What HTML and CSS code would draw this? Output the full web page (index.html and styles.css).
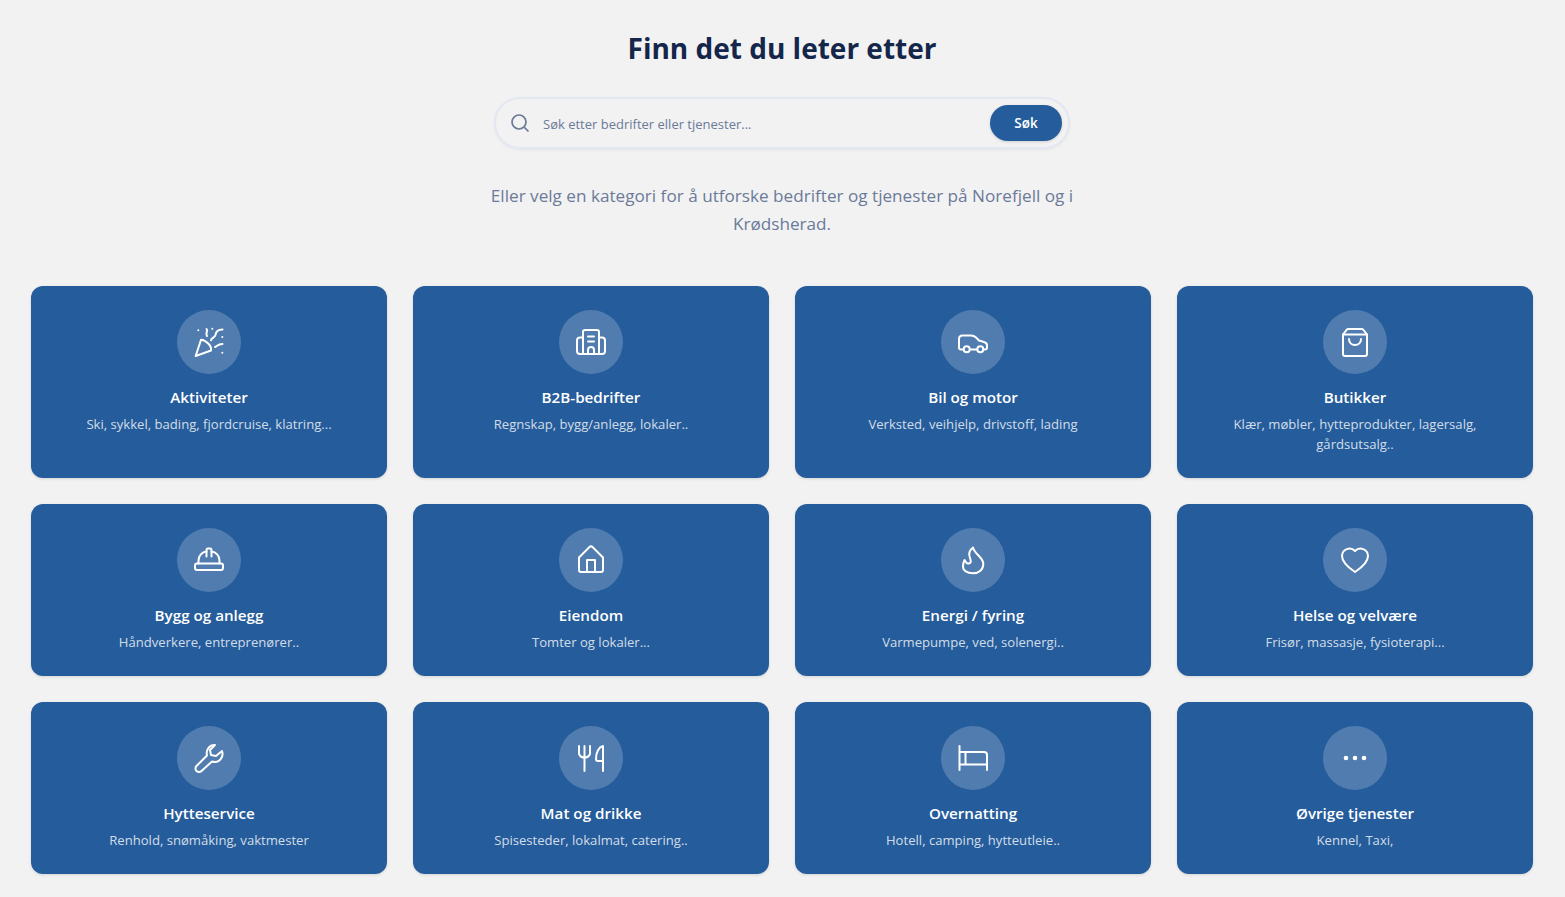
FILE: index.html
```html
<!DOCTYPE html>
<html lang="no">
<head>
    <meta charset="UTF-8">
    <meta name="viewport" content="width=device-width, initial-scale=1.0">
    <title>Finn det du leter etter</title>
    <link rel="stylesheet" href="styles.css">
</head>
<body>
    <main class="page">
        <h1>Finn det du leter etter</h1>

        <form class="search">
            <svg class="search-icon" viewBox="0 0 20 20"><circle cx="9" cy="9" r="7"/><path d="M14 14l4.5 4.5"/></svg>
            <input type="text" placeholder="Søk etter bedrifter eller tjenester...">
            <button type="button">Søk</button>
        </form>

        <p class="intro">Eller velg en kategori for å utforske bedrifter og tjenester på Norefjell og i Krødsherad.</p>

        <section class="grid">
            <a class="card">
                <span class="icon"><svg viewBox="0 0 32 32"><path d="M8 13.7L2.7 30 18 24.5C19 20 13 14 8 13.7z"/><path d="M13.5 3c2.5 2-2 4 .5 7"/><path d="M18 14.3c.5-3 4-2.5 4.5-5.500.5-3.500 3-5.300 7-5.300"/><path d="M22 21c2-.5 2.500-3 7.500-3"/><path d="M5.3 4.3h.01M19.3 2.700h.01M29.3 11h.01M29.3 26.700h.01"/></svg></span>
                <h2>Aktiviteter</h2>
                <p>Ski, sykkel, bading, fjordcruise, klatring...</p>
            </a>
            <a class="card">
                <span class="icon"><svg viewBox="0 0 32 32"><path d="M8 28V6a2 2 0 0 1 2-2h12a2 2 0 0 1 2 2v22"/><path d="M8 11.5H5a3 3 0 0 0-3 3V25a3 3 0 0 0 3 3h22a3 3 0 0 0 3-3V14.5a3 3 0 0 0-3-3h-3"/><path d="M13 10.5h6M13 15.5h6"/><path d="M13 28v-4a3 3 0 0 1 6 0v4"/></svg></span>
                <h2>B2B-bedrifter</h2>
                <p>Regnskap, bygg/anlegg, lokaler..</p>
            </a>
            <a class="card">
                <span class="icon"><svg viewBox="0 0 32 32"><path d="M6.5 23.5H4a2 2 0 0 1-2-2V13c0-2.500 1.500-3.500 3.500-3.500H14c2 0 3.500.5 5 2l3 3 5 1.500c2 .5 3 1.500 3 3.500v2a2 2 0 0 1-2 2h-1.500M13 23.500h7"/><circle cx="9.7" cy="23.3" r="3"/><circle cx="23.3" cy="23.3" r="3"/></svg></span>
                <h2>Bil og motor</h2>
                <p>Verksted, veihjelp, drivstoff, lading</p>
            </a>
            <a class="card">
                <span class="icon"><svg viewBox="0 0 32 32"><path d="M4 8.5V28a2 2 0 0 0 2 2h20a2 2 0 0 0 2-2V8.5L24.5 4a2.5 2.5 0 0 0-2-1h-13a2.500 2.500 0 0 0-2 1z"/><path d="M4 8.5h24"/><path d="M10 13c0 3.5 2.500 6 6 6s6-2.500 6-6"/></svg></span>
                <h2>Butikker</h2>
                <p>Klær, møbler, hytteprodukter, lagersalg, gårdsutsalg..</p>
            </a>

            <a class="card">
                <span class="icon"><svg viewBox="0 0 32 32"><rect x="2" y="19.5" width="28" height="6.500" rx="2"/><path d="M5.5 19.5v-3C5.500 11.500 9 8 13.500 7.500M26.500 19.500v-3C26.500 11.500 23 8 18.500 7.500"/><path d="M13.5 12.5V6A1.500 1.500 0 0 1 15 4.500h2A1.500 1.500 0 0 1 18.500 6v6.500"/></svg></span>
                <h2>Bygg og anlegg</h2>
                <p>Håndverkere, entreprenører..</p>
            </a>
            <a class="card">
                <span class="icon"><svg viewBox="0 0 32 32"><path d="M4 13.5L14.5 3a2 2 0 0 1 3 0L28 13.500V26a2 2 0 0 1-2 2H6a2 2 0 0 1-2-2z"/><path d="M12 28V16h8v12"/></svg></span>
                <h2>Eiendom</h2>
                <p>Tomter og lokaler...</p>
            </a>
            <a class="card">
                <span class="icon"><svg viewBox="0 0 32 32"><path d="M16 3.5C12.5 6 11.500 10 13 14c1 3 1.500 5-1 5.500-2 .5-3.500-1.500-4.500-3.500C6.500 18 6 20.500 6 22.500c0 4 4 6.800 10 6.800s10.300-3.800 10.300-9.300C26.300 13 18 11 16 3.500z"/></svg></span>
                <h2>Energi / fyring</h2>
                <p>Varmepumpe, ved, solenergi..</p>
            </a>
            <a class="card">
                <span class="icon"><svg viewBox="0 0 32 32"><path d="M16 28C10 24 3 18.5 3 12a7.500 7.500 0 0 1 13-5 7.500 7.500 0 0 1 13 5c0 6.500-7 12-13 16z"/></svg></span>
                <h2>Helse og velvære</h2>
                <p>Frisør, massasje, fysioterapi...</p>
            </a>

            <a class="card">
                <span class="icon"><svg viewBox="0 0 32 32"><path d="M22 3l-5 5 1 5 5 1 6-5c2 5-2 11-7 11-1 0-2 0-3-.5L8.500 29a3.500 3.500 0 0 1-5-5L14 13.500C12.500 7.500 17 2.500 22 3z"/></svg></span>
                <h2>Hytteservice</h2>
                <p>Renhold, snømåking, vaktmester</p>
            </a>
            <a class="card">
                <span class="icon"><svg viewBox="0 0 32 32"><path d="M4 4v8a6 6 0 0 0 11 0V4M9.5 4v25"/><path d="M28 29V4c-4 1-7 6-7 13a2 2 0 0 0 2 2h5"/></svg></span>
                <h2>Mat og drikke</h2>
                <p>Spisesteder, lokalmat, catering..</p>
            </a>
            <a class="card">
                <span class="icon"><svg viewBox="0 0 32 32"><path d="M2.5 4v24M2.5 22.5H30M8.5 10v12.500M2.500 10H27a3 3 0 0 1 3 3v15"/></svg></span>
                <h2>Overnatting</h2>
                <p>Hotell, camping, hytteutleie..</p>
            </a>
            <a class="card">
                <span class="icon"><svg class="dots" viewBox="0 0 32 32"><circle cx="7" cy="16" r="2.3"/><circle cx="16" cy="16" r="2.3"/><circle cx="25" cy="16" r="2.3"/></svg></span>
                <h2>Øvrige tjenester</h2>
                <p>Kennel, Taxi,</p>
            </a>
        </section>
    </main>
</body>
</html>
```

FILE: styles.css
```css
* {
    box-sizing: border-box;
}
body {
    margin: 0;
    background: #f2f2f2;
    font-family: "Open Sans", "Noto Sans", sans-serif;
}
.page {
    padding: 28px 32px 23px 31px;
}
h1 {
    margin: 0 0 28px;
    text-align: center;
    font-size: 28px;
    line-height: 41px;
    font-weight: 700;
    color: #14264a;
}
.search {
    display: flex;
    align-items: center;
    width: 576px;
    height: 52px;
    margin: 0 auto;
    padding: 0 6px 0 14px;
    border: 2px solid #e3e7f2;
    border-radius: 26px;
    box-shadow: 0 1px 3px rgba(0,0,0,0.06);
}
.search-icon {
    width: 20px;
    height: 20px;
    flex: none;
    fill: none;
    stroke: #6b7a99;
    stroke-width: 1.7;
}
.search input {
    flex: 1;
    min-width: 0;
    margin-left: 13px;
    padding: 2px 0 0;
    border: none;
    outline: none;
    background: none;
    font-family: inherit;
    font-size: 13px;
    color: #6b7a99;
}
.search input::placeholder {
    color: #6b7a99;
    opacity: 1;
}
.search button {
    width: 72px;
    height: 36px;
    border: none;
    border-radius: 18px;
    background: #255c9b;
    color: white;
    font-family: inherit;
    font-size: 13.5px;
    font-weight: 600;
    box-shadow: 0 1px 3px rgba(0,0,0,0.15);
}
.intro {
    width: 600px;
    margin: 33px auto 48px;
    text-align: center;
    font-size: 17.15px;
    line-height: 28px;
    color: #6b7a99;
}
.grid {
    display: grid;
    grid-template-columns: repeat(4, 356px);
    gap: 26px;
}
.card {
    display: block;
    min-height: 172px;
    padding: 24px;
    border-radius: 12px;
    background: #255c9b;
    text-align: center;
    box-shadow: 0 1px 3px rgba(0,0,0,0.12);
}
.icon {
    display: flex;
    align-items: center;
    justify-content: center;
    width: 64px;
    height: 64px;
    margin: 0 auto 12px;
    border-radius: 50%;
    background: rgba(255,255,255,0.2);
}
.icon svg {
    width: 32px;
    height: 32px;
    fill: none;
    stroke: white;
    stroke-width: 2;
    stroke-linecap: round;
    stroke-linejoin: round;
}
.icon svg.dots {
    fill: white;
    stroke: none;
}
.card h2 {
    margin: 0 0 6px;
    font-size: 15.2px;
    line-height: 22px;
    font-weight: 600;
    color: white;
}
.card p {
    margin: 0;
    font-size: 13.1px;
    line-height: 20px;
    color: rgba(255,255,255,0.8);
}
```
